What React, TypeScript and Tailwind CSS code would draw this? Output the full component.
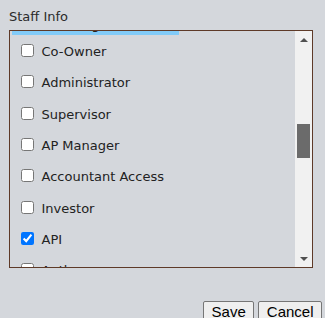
import React from "react";

const items: { label: string; checked?: boolean }[] = [
  { label: "Co-Owner" },
  { label: "Administrator" },
  { label: "Supervisor" },
  { label: "AP Manager" },
  { label: "Accountant Access" },
  { label: "Investor" },
  { label: "API", checked: true },
  { label: "Author" },
];

export default function App() {
  return (
    <div className="w-[325px] h-[318px] overflow-hidden bg-[#d4d7dc] font-['DejaVu_Sans',sans-serif]">
      <div className="pl-[9px] pt-[8.5px] text-[13px] leading-[15px] text-[#2b2b2b]">Staff Info</div>
      <div className="ml-[9px] mt-[6.5px] w-[304px] h-[238px] border border-[#5e3a28] flex">
        <div className="flex-1 overflow-hidden">
          <div className="ml-[2px] mt-[-13.8px] w-[167px] h-[17.5px] bg-[#82cbf8] pl-[2px] text-[13px] leading-[15px] text-[#222]">
            Office Manager
          </div>
          {items.map((it) => (
            <label key={it.label} className="h-[31.33px] flex items-center pl-[10.5px] gap-[8px]">
              <input type="checkbox" defaultChecked={it.checked} className="m-0 w-[13px] h-[13px] shrink-0" />
              <span className="text-[13px] leading-[15px] text-[#222] mt-[2px] whitespace-nowrap">{it.label}</span>
            </label>
          ))}
        </div>
        <div className="w-[17px] bg-[#f1f1f1] flex flex-col">
          <div className="h-[17px] flex items-center justify-center">
            <svg width="8" height="4" viewBox="0 0 8 4">
              <polygon points="0,4 4,0 8,4" fill="#505050" />
            </svg>
          </div>
          <div className="flex-1">
            <div className="mt-[75.7px] mx-[2px] h-[34px] bg-[#6b6b6b]" />
          </div>
          <div className="h-[17px] flex items-center justify-center">
            <svg width="8" height="4" viewBox="0 0 8 4">
              <polygon points="0,0 8,0 4,4" fill="#505050" />
            </svg>
          </div>
        </div>
      </div>
      <div className="mt-[33px] flex justify-end gap-[4px] pr-[3px] font-['Liberation_Sans',Arial,sans-serif]">
        <button className="bg-[#efefef] border border-[#767676] rounded-[2px] px-[7.5px] py-[1px] text-[15px] leading-[17px] text-black">
          Save
        </button>
        <button className="bg-[#efefef] border border-[#767676] rounded-[2px] px-[7.5px] py-[1px] text-[15px] leading-[17px] text-black">
          Cancel
        </button>
      </div>
    </div>
  );
}
